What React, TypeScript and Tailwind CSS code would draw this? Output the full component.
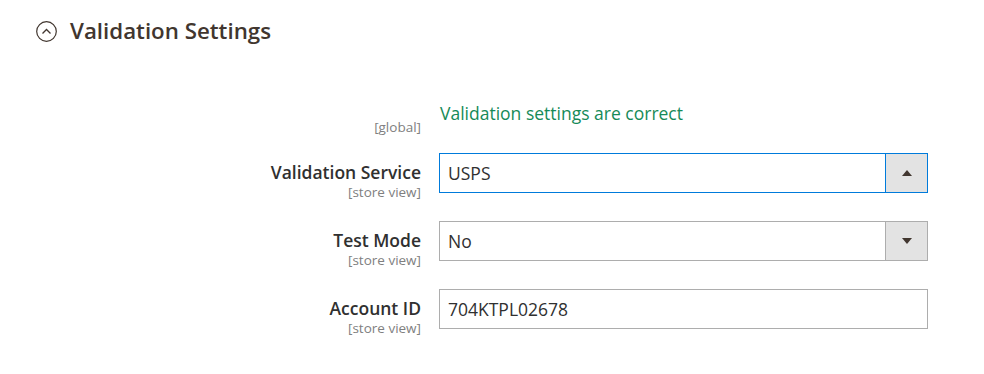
import React from "react";

const font = { fontFamily: '"Open Sans", "Noto Sans", sans-serif' };

function Arrow({ up }: { up: boolean }) {
  return (
    <svg width="10" height="6" viewBox="0 0 10 6">
      {up ? <polygon points="0,6 10,6 5,0" fill="#41362f" /> : <polygon points="0,0 10,0 5,6" fill="#41362f" />}
    </svg>
  );
}

function Select({ value, up, focused }: { value: string; up: boolean; focused?: boolean }) {
  const border = focused ? "border-[#007bdb]" : "border-[#adadad]";
  return (
    <div className={`ml-[18px] flex h-[40px] w-[489px] border ${border} bg-white`}>
      <div className="flex-1 pl-[8px] text-[17.5px] leading-[38px] text-[#303030]">{value}</div>
      <div className={`flex w-[42px] items-center justify-center border-l ${border} bg-[#e3e3e3]`}>
        <Arrow up={up} />
      </div>
    </div>
  );
}

function Label({ title, scope }: { title: string; scope: string }) {
  return (
    <div className="w-[421px] pt-[9px] text-right">
      <div className="text-[17.5px] font-semibold leading-[21px] text-[#303030]">{title}</div>
      <div className="mt-[1px] text-[13.5px] leading-[16px] text-[#808080]">{scope}</div>
    </div>
  );
}

export default function App() {
  return (
    <div className="h-[374px] w-[984px] bg-white" style={font}>
      <div className="flex items-center pl-[36px] pt-[16px]">
        <svg width="21" height="21" viewBox="0 0 21 21">
          <circle cx="10.5" cy="10.5" r="9.8" fill="none" stroke="#41362f" strokeWidth="1.2" />
          <polyline points="6.5,12.5 10.5,8.5 14.5,12.5" fill="none" stroke="#41362f" strokeWidth="1.3" />
        </svg>
        <div className="ml-[13px] text-[22.3px] font-semibold leading-[30px] text-[#41362f]">Validation Settings</div>
      </div>

      <div className="mt-[56px]">
        <div className="flex items-start">
          <div className="w-[421px] pt-[17px] text-right text-[13.5px] leading-[16px] text-[#808080]">[global]</div>
          <div className="ml-[19px] text-[17.5px] leading-[22px] text-[#168a58]">Validation settings are correct</div>
        </div>

        <div className="mt-[18px] flex items-start">
          <Label title="Validation Service" scope="[store view]" />
          <Select value="USPS" up focused />
        </div>

        <div className="mt-[21px] flex items-start">
          <Label title="Test Mode" scope="[store view]" />
          <Select value="No" up={false} />
        </div>

        <div className="mt-[21px] flex items-start">
          <Label title="Account ID" scope="[store view]" />
          <div className="ml-[18px] h-[40px] w-[489px] border border-[#adadad] bg-white pl-[8px] text-[17.5px] leading-[38px] text-[#303030]">
            704KTPL02678
          </div>
        </div>
      </div>
    </div>
  );
}
